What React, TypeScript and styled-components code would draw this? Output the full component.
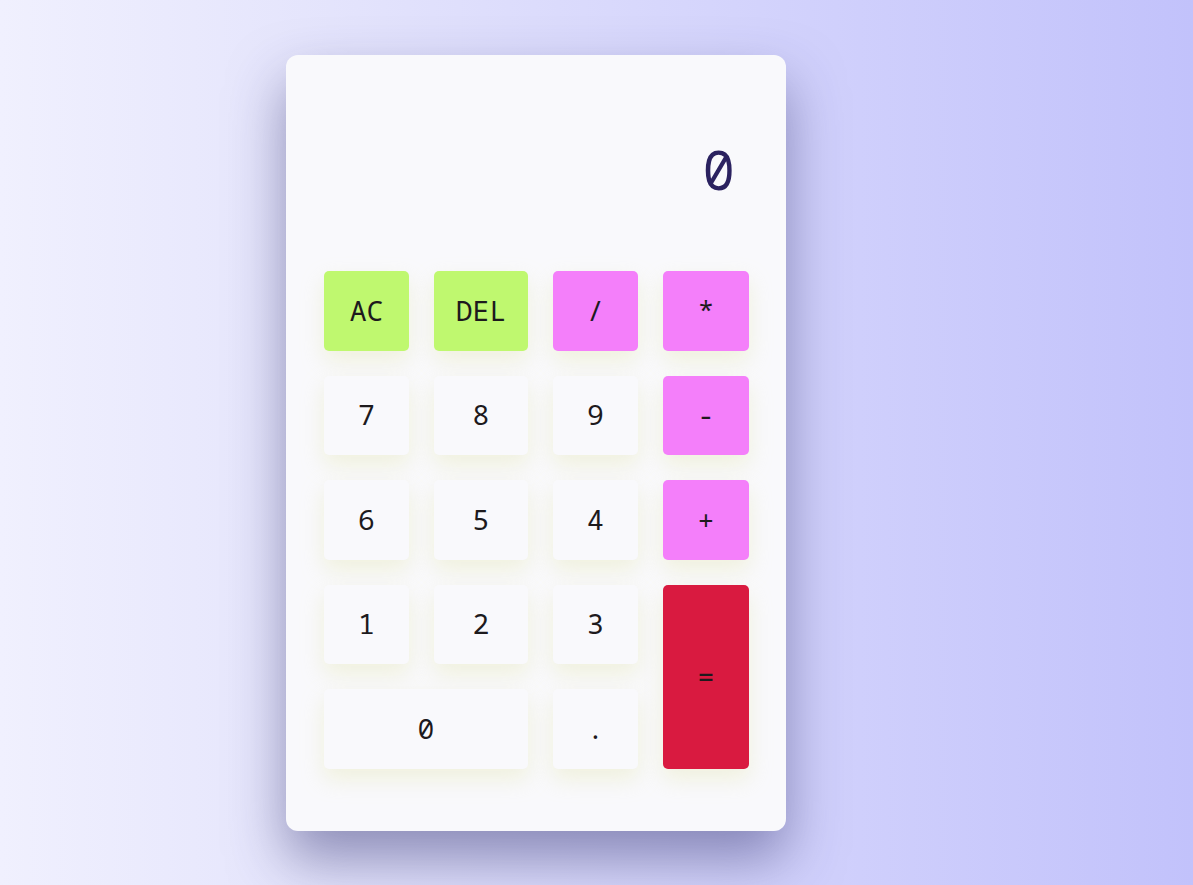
import React from "react";
import styled, { createGlobalStyle } from "styled-components";

const Global = createGlobalStyle`
  html, body { margin: 0; padding: 0; }
  body {
    min-height: 885px;
    background: linear-gradient(to right, #f0f0fe 0%, #e3e3fc 30%, #d0d0fc 70%, #c2c2fb 100%);
    font-family: "Noto Sans Mono", "DejaVu Sans Mono", monospace;
  }
`;

const Page = styled.div`
  display: flex;
  justify-content: flex-start;
  padding: 55px 0 0 286px;
  min-height: 885px;
  box-sizing: border-box;
`;

const Card = styled.div`
  width: 500px;
  height: 776px;
  box-sizing: border-box;
  background: #f9f9fc;
  border-radius: 12px;
  padding: 38px 37px 0 38px;
  box-shadow: 0 28px 55px rgba(55, 55, 115, 0.5);
  display: flex;
  flex-direction: column;
`;

const Display = styled.div`
  height: 178px;
  box-sizing: border-box;
  display: flex;
  justify-content: flex-end;
  align-items: flex-start;
  padding: 48px 14px 0 0;
  font-size: 54px;
  line-height: 56px;
  color: #2b2260;
`;

const Keys = styled.div`
  display: grid;
  grid-template-columns: 85px 94px 85px 86px;
  grid-auto-rows: 79.5px;
  gap: 25px;
`;

type Kind = "clear" | "op" | "num" | "eq";

const colors: Record<Kind, string> = {
  clear: "#bff86f",
  op: "#f47ffa",
  num: "#f9f9fc",
  eq: "#d91a40",
};

const Key = styled.button<{ $kind: Kind; $span?: number; $rows?: number }>`
  border: none;
  border-radius: 5px;
  background: ${(p) => colors[p.$kind]};
  color: #1d1a1d;
  font-family: "Noto Sans Mono", "DejaVu Sans Mono", monospace;
  font-size: 28px;
  display: flex;
  align-items: center;
  justify-content: center;
  padding: 0 0 2px;
  box-shadow: 0 10px 22px rgba(225, 228, 170, 0.38);
  grid-column: span ${(p) => p.$span ?? 1};
  grid-row: span ${(p) => p.$rows ?? 1};
  cursor: pointer;
`;

export default function App() {
  return (
    <>
      <Global />
      <Page>
        <Card>
          <Display>0</Display>
          <Keys>
            <Key $kind="clear">AC</Key>
            <Key $kind="clear">DEL</Key>
            <Key $kind="op">/</Key>
            <Key $kind="op">*</Key>
            <Key $kind="num">7</Key>
            <Key $kind="num">8</Key>
            <Key $kind="num">9</Key>
            <Key $kind="op">-</Key>
            <Key $kind="num">6</Key>
            <Key $kind="num">5</Key>
            <Key $kind="num">4</Key>
            <Key $kind="op">+</Key>
            <Key $kind="num">1</Key>
            <Key $kind="num">2</Key>
            <Key $kind="num">3</Key>
            <Key $kind="eq" $rows={2}>=</Key>
            <Key $kind="num" $span={2}>0</Key>
            <Key $kind="num">.</Key>
          </Keys>
        </Card>
      </Page>
    </>
  );
}
